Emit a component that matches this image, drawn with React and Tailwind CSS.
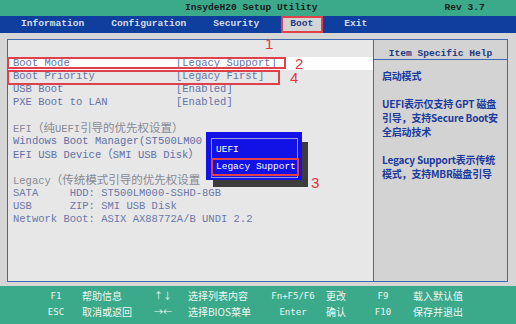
const mono = "font-['Liberation_Mono','Noto_Sans_CJK_SC',monospace]";
const cjk = "font-['Noto_Sans_CJK_SC','Liberation_Sans',sans-serif]";

const settings = [
  { label: "Boot Mode", value: "[Legacy Support]", active: true },
  { label: "Boot Priority", value: "[Legacy First]" },
  { label: "USB Boot", value: "[Enabled]" },
  { label: "PXE Boot to LAN", value: "[Enabled]" },
];

// wide glyphs are drawn a bit larger so they take two mono cells, like the BIOS font
function W({ children }) {
  return <span className="text-[11.5px]">{children}</span>;
}

// the popup sits over the right end of some lines, only the visible part is kept
const bootLines = [
  { key: "b1", tone: "" },
  {
    key: "efi",
    tone: "text-[#868a96]",
    text: (
      <>
        EFI<W>（纯</W>UEFI<W>引导的优先权设置）</W>
      </>
    ),
  },
  { key: "win", tone: "text-[#5f6fa6]", text: "Windows Boot Manager(ST500LM00" },
  {
    key: "usb",
    tone: "text-[#5f6fa6]",
    text: (
      <>
        EFI USB Device<W>（</W>SMI USB Disk<W>）</W>
      </>
    ),
  },
  { key: "b2", tone: "" },
  {
    key: "leg",
    tone: "text-[#868a96]",
    text: (
      <>
        Legacy<W>（传统模式引导的优先权设置</W>
      </>
    ),
  },
  { key: "sata", tone: "text-[#6b78a8]", text: "SATA     HDD: ST500LM000-SSHD-8GB" },
  { key: "zip", tone: "text-[#6b78a8]", text: "USB      ZIP: SMI USB Disk" },
  { key: "net", tone: "text-[#6b78a8]", text: "Network Boot: ASIX AX88772A/B UNDI 2.2" },
];

const help = [
  "启动模式",
  "",
  "UEFI表示仅支持 GPT 磁盘",
  "引导，支持Secure Boot安",
  "全启动技术",
  "",
  "Legacy Support表示传统",
  "模式，支持MBR磁盘引导",
];

const keys = [
  ["F1", "帮助信息", "↑↓", "选择列表内容", "Fn+F5/F6", "更改", "F9", "载入默认值"],
  ["ESC", "取消或返回", "→←", "选择BIOS菜单", "Enter", "确认", "F10", "保存并退出"],
];

function Mark({ n, className }) {
  return (
    <span
      className={`absolute text-[15px] leading-none text-[#e03a3e] font-['Liberation_Sans',sans-serif] ${className}`}
    >
      {n}
    </span>
  );
}

export default function App() {
  return (
    <div className="relative w-[516px] h-[324px] overflow-hidden flex flex-col bg-[#d6d6d6]">
      {/* title */}
      <div className={`h-[16px] bg-[#3baa8b] flex items-center text-[9.6px] font-bold text-[#1c1c1c] ${mono}`}>
        <span className="ml-[185px]">InsydeH20 Setup Utility</span>
        <span className="ml-[127px]">Rev 3.7</span>
      </div>

      {/* menu */}
      <div className={`h-[17px] bg-[#0f3f9e] flex items-center text-[9.6px] font-bold text-[#d6dcea] ${mono}`}>
        <span className="ml-[21px]">Information</span>
        <span className="ml-[27px]">Configuration</span>
        <span className="ml-[27px]">Security</span>
        <span className="ml-[22px] h-[17px] w-[42px] flex items-center pl-[7px] bg-[#d4d4d4] text-[#1d3c8a] border-2 border-[#e0404a]">
          Boot
        </span>
        <span className="ml-[21px]">Exit</span>
      </div>

      {/* body */}
      <div className="flex-1 pt-[6px] pl-[7px] pr-[8px] pb-[4px]">
        <div className="h-full flex border border-[#3f69b3]">
          <div className={`w-[366px] bg-[#e7e7e7] border-r border-[#3f69b3] pt-[17px] text-[10.5px] leading-[13px] ${mono}`}>
            {settings.map((s) => (
              <div
                key={s.label}
                className={`grid grid-cols-[163px_1fr] h-[13px] pl-[5px] text-[#6474a8] ${s.active ? "bg-white" : ""}`}
              >
                <span>{s.label}</span>
                <span>{s.value}</span>
              </div>
            ))}
            {bootLines.map((l) => (
              <div key={l.key} className={`h-[13px] pl-[5px] whitespace-pre ${l.tone}`}>
                {l.text}
              </div>
            ))}
          </div>

          <div className="flex-1 bg-[#d3d3d3]">
            <div className={`h-[20px] border-b border-[#3f69b3] pt-[8px] text-center text-[9.6px] leading-[12px] font-bold text-[#203a82] ${mono}`}>
              Item Specific Help
            </div>
            <div className={`pt-[9px] pl-[8px] text-[10px] leading-[14px] font-bold text-[#1a3a9e] tracking-[-0.2px] ${cjk}`}>
              {help.map((t, i) => (
                <div key={i} className="h-[14px] whitespace-nowrap">
                  {t}
                </div>
              ))}
            </div>
          </div>
        </div>
      </div>

      {/* footer */}
      <div className="h-[38px] bg-[#3baa8b] pt-[2px] text-[#eef6f2] text-[10px] leading-[16px]">
        {keys.map((r, i) => (
          <div key={i} className="flex h-[16px] pl-[36px]">
            <span className="w-[40px] text-center text-[9px] font-['DejaVu_Sans_Mono',monospace]">{r[0]}</span>
            <span className={`ml-[6px] w-[56px] ${cjk}`}>{r[1]}</span>
            <span className={`w-[50px] text-center text-[9px] ${cjk}`}>{r[2]}</span>
            <span className={`w-[80px] ${cjk}`}>{r[3]}</span>
            <span className="w-[50px] text-center text-[9px] font-['DejaVu_Sans_Mono',monospace]">{r[4]}</span>
            <span className={`ml-[8px] w-[32px] ${cjk}`}>{r[5]}</span>
            <span className="w-[50px] text-center text-[9px] font-['DejaVu_Sans_Mono',monospace]">{r[6]}</span>
            <span className={`ml-[5px] ${cjk}`}>{r[7]}</span>
          </div>
        ))}
      </div>

      {/* popup */}
      <div className="absolute left-[213px] top-[142px] w-[95px] h-[45px] bg-[#3c3c3c]" />
      <div className="absolute left-[206px] top-[132px] w-[96px] h-[48px] bg-[#1212e6]">
        <div className={`absolute left-[5px] top-[6px] w-[87px] h-[40px] border border-[#9a9ae6] pt-[4px] pl-[4px] text-[9.5px] leading-[14px] text-white ${mono}`}>
          <div>UEFI</div>
          <div className="mt-[3px]">Legacy Support</div>
        </div>
        <div className="absolute left-[5px] top-[26px] w-[88px] h-[18px] border-2 border-[#e0404a]" />
      </div>

      {/* annotations */}
      <div className="absolute left-[7px] top-[57px] w-[279px] h-[12px] border-2 border-[#e0404a]" />
      <div className="absolute left-[7px] top-[70px] w-[273px] h-[15px] border-2 border-[#e0404a]" />
      <Mark n="1" className="left-[265px] top-[36px]" />
      <Mark n="2" className="left-[295px] top-[56px]" />
      <Mark n="4" className="left-[290px] top-[70px]" />
      <Mark n="3" className="left-[311px] top-[175px]" />
    </div>
  );
}
